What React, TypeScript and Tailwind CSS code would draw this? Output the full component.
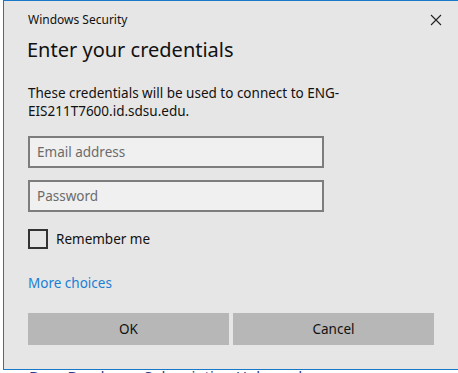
export default function App() {
  const font = { fontFamily: '"Noto Sans", "Open Sans", sans-serif' };
  return (
    <div className="relative w-[458px] h-[373px] bg-white overflow-hidden" style={font}>
      {/* page text behind the dialog */}
      <p className="absolute left-[29px] top-[366px] text-[15px] leading-[20px] text-[#2b3a8c] whitespace-nowrap">
        Drag Deadman, Subscription Unbound
      </p>

      <div className="relative z-10 ml-[3px] w-[455px] h-[370px] bg-[#e6e6e6] border-l border-t border-b border-[#1a78c8] flex flex-col pl-[24px]">
        <div className="flex items-center justify-between h-[36px] pr-[16px]">
          <span className="text-[12px] text-[#111] mt-[1px]">Windows Security</span>
          <svg width="12" height="12" viewBox="0 0 12 12" className="mt-[1px]">
            <path d="M1 1 L11 11 M11 1 L1 11" stroke="#222" strokeWidth="1.1" />
          </svg>
        </div>

        <h1 className="text-[20px] leading-[26px] text-[#111] -ml-[1px]">Enter your credentials</h1>

        <p className="mt-[21px] w-[380px] text-[13.5px] leading-[18px] text-[#111]">
          These credentials will be used to connect to ENG-EIS211T7600.id.sdsu.edu.
        </p>

        <input
          className="mt-[16px] w-[296px] h-[32px] border-2 border-[#7d7d7d] bg-[#f0f0f0] px-[7px] text-[13.5px] text-[#111] placeholder:text-[#6b6b6b] outline-none"
          placeholder="Email address"
          style={font}
        />
        <input
          type="password"
          className="mt-[12px] w-[296px] h-[32px] border-2 border-[#7d7d7d] bg-[#f0f0f0] px-[7px] text-[13.5px] text-[#111] placeholder:text-[#6b6b6b] outline-none"
          placeholder="Password"
          style={font}
        />

        <label className="mt-[17px] flex items-center gap-[8px]">
          <span className="w-[20px] h-[20px] border-2 border-[#333]" />
          <span className="text-[13.5px] text-[#111]">Remember me</span>
        </label>

        <a className="mt-[25px] text-[13.5px] leading-[18px] text-[#1a7fd4]">More choices</a>

        <div className="mt-[21px] flex gap-[4px]">
          <button className="w-[201px] h-[32px] bg-[#b7b7b7] text-[13.5px] text-[#111]" style={font}>OK</button>
          <button className="w-[201px] h-[32px] bg-[#b7b7b7] text-[13.5px] text-[#111]" style={font}>Cancel</button>
        </div>
      </div>
    </div>
  );
}
